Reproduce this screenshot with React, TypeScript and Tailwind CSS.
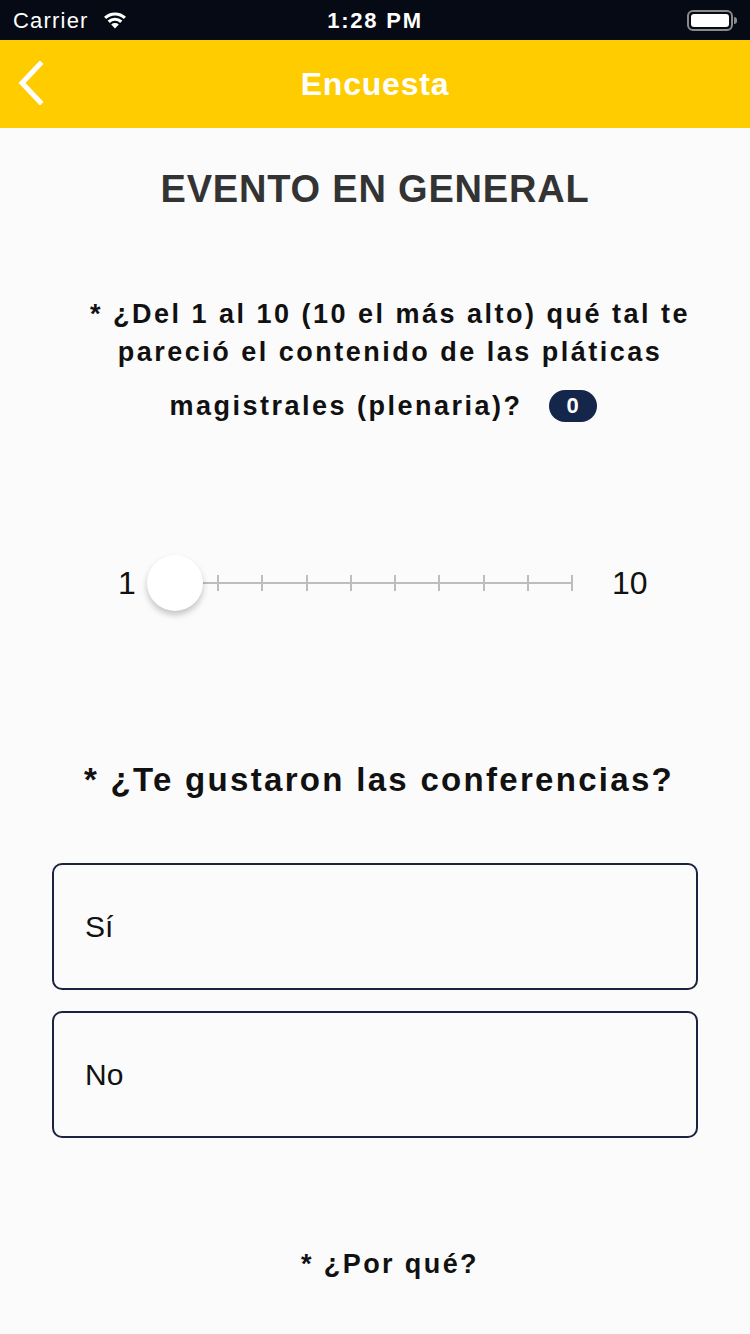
import React from "react";

function Wifi() {
  return (
    <svg width="28" height="20" viewBox="0 0 28 20">
      <path d="M14 18.5 L10.2 14.4 A5.6 5.6 0 0 1 17.8 14.4 Z" fill="white" />
      <path d="M6.6 10.6 A10.8 10.8 0 0 1 21.4 10.6 L19.2 12.9 A7.6 7.6 0 0 0 8.8 12.9 Z" fill="white" />
      <path d="M3 6.8 A16 16 0 0 1 25 6.8 L22.8 9.1 A12.8 12.8 0 0 0 5.2 9.1 Z" fill="white" />
    </svg>
  );
}

function Battery() {
  return (
    <div className="flex items-center">
      <div className="w-[46px] h-[21px] rounded-[6px] border-2 border-[#8a8a8a] p-[2px]">
        <div className="w-full h-full bg-white rounded-[3px]" />
      </div>
      <div className="w-[3px] h-[7px] bg-[#8a8a8a] rounded-r-sm ml-[1px]" />
    </div>
  );
}

export default function App() {
  const ticks = [0, 1, 2, 3, 4, 5, 6, 7, 8];
  return (
    <div
      className="w-[750px] h-[1334px] bg-[#fbfbfb] flex flex-col overflow-hidden"
      style={{ fontFamily: '"Liberation Sans", Arial, sans-serif' }}
    >
      {/* status bar */}
      <div className="h-[40px] bg-[#050a14] flex items-center px-[13px] text-white relative">
        <div className="flex items-center gap-[12px]">
          <span className="text-[22px] tracking-[1.2px]">Carrier</span>
          <Wifi />
        </div>
        <div className="absolute left-0 right-0 text-center text-[22px] font-bold tracking-[1.8px]">1:28 PM</div>
        <div className="ml-auto">
          <Battery />
        </div>
      </div>
      {/* nav bar */}
      <div className="h-[88px] bg-[#ffcc00] flex items-center relative">
        <svg className="absolute left-[14px] top-[21px]" width="32" height="44" viewBox="0 0 32 44">
          <path d="M26 3 L8 22 L26 41" stroke="white" strokeWidth="5" fill="none" strokeLinecap="square" />
        </svg>
        <div className="w-full text-center text-white font-bold text-[32px] tracking-[0.8px]">Encuesta</div>
      </div>

      {/* content */}
      <div className="flex flex-col items-center">
        <div className="mt-[41px] text-[38px] font-bold text-[#333333] leading-[40px] tracking-[0.8px]">EVENTO EN GENERAL</div>

        <div className="mt-[86px] ml-[30px] w-[640px] text-center text-[27px] font-bold text-[#111111] tracking-[2.5px] leading-[38px]">
          * ¿Del 1 al 10 (10 el más alto) qué tal te pareció el contenido de las pláticas
          <div className="mt-[16px] flex items-center justify-center">
            <span>magistrales (plenaria)?</span>
            <span className="ml-[26px] mr-[14px] inline-flex items-center justify-center w-[48px] h-[32px] rounded-full bg-[#14264a] text-white text-[22px] tracking-normal">0</span>
          </div>
        </div>

        {/* slider */}
        <div className="mt-[128px] w-full flex items-center pl-[118px]">
          <span className="text-[32px] text-[#111] w-[29px] leading-none">1</span>
          <div className="relative w-[427px] h-[60px]">
            <div className="absolute left-[28px] w-[398px] top-[29px] h-[2px] bg-[#bdbdbd]" />
            {ticks.map((i) => (
              <div
                key={i}
                className="absolute top-[22px] w-[2px] h-[16px] bg-[#bdbdbd]"
                style={{ left: 70 + i * 44.25 }}
              />
            ))}
            <div className="absolute left-0 top-[2px] w-[56px] h-[56px] rounded-full bg-white shadow-[0_4px_6px_rgba(0,0,0,0.22)]" />
          </div>
          <span className="ml-[38px] text-[32px] text-[#111] leading-none">10</span>
        </div>

        <div className="mt-[147px] ml-[8px] text-[33px] font-bold text-[#111] tracking-[2.3px] leading-[40px]">
          * ¿Te gustaron las conferencias?
        </div>

        <div className="mt-[63px] w-[646px] flex flex-col gap-[21px]">
          <div className="h-[127px] rounded-[10px] border-2 border-[#1a2340] flex items-center px-[31px] text-[30px] text-[#111]">
            Sí
          </div>
          <div className="h-[127px] rounded-[10px] border-2 border-[#1a2340] flex items-center px-[31px] text-[30px] text-[#111]">
            No
          </div>
        </div>

        <div className="mt-[106px] ml-[30px] text-[27px] font-bold text-[#111] tracking-[2.4px]">* ¿Por qué?</div>
      </div>
    </div>
  );
}
